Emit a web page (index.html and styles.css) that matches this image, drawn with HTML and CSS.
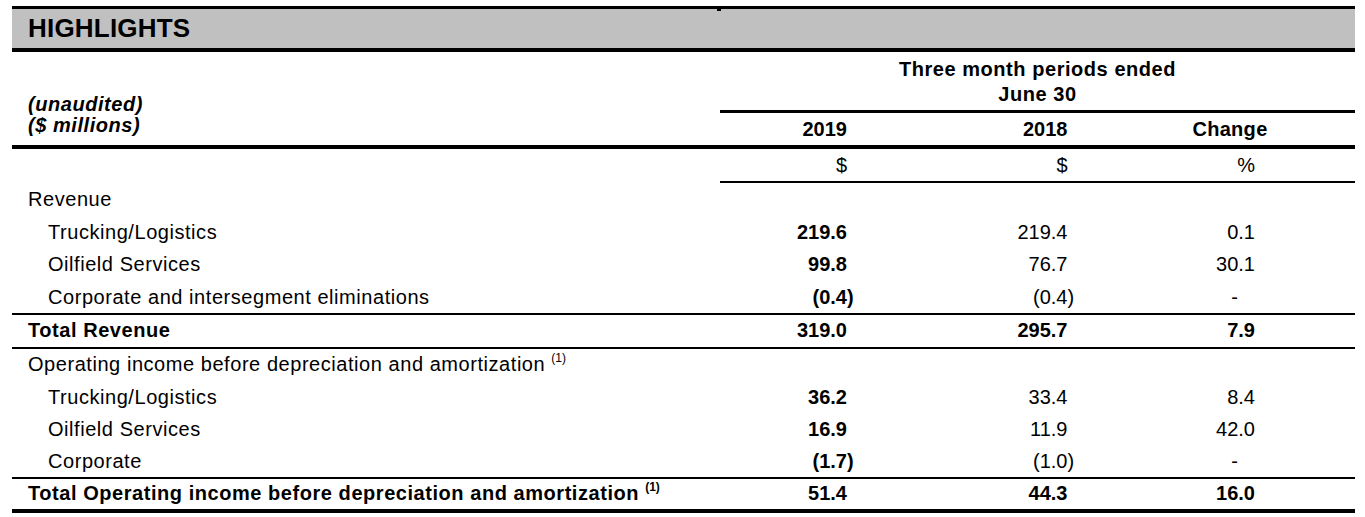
FILE: index.html
```html
<!DOCTYPE html>
<html lang="en">
<head>
<meta charset="utf-8">
<title>Highlights</title>
<link rel="stylesheet" href="styles.css">
</head>
<body>
<div class="page">
  <div class="band">HIGHLIGHTS</div>

  <div class="head">
    <div class="units"><span>(unaudited)</span><span>($ millions)</span></div>
    <div class="period">Three month periods ended<br>June 30</div>
    <div class="yr c2">2019</div>
    <div class="yr c3">2018</div>
    <div class="yr c4 chg">Change</div>
  </div>

  <div class="row">
    <div class="lbl"></div>
    <div class="sub">
      <div class="c2">$</div>
      <div class="c3">$</div>
      <div class="c4">%</div>
    </div>
  </div>

  <div class="sec rev">
    <div class="row"><div class="lbl t">Revenue</div><div class="c2"></div><div class="c3"></div><div class="c4"></div></div>
    <div class="row"><div class="lbl t in">Trucking/Logistics</div><div class="c2 b">219.6</div><div class="c3">219.4</div><div class="c4">0.1</div></div>
    <div class="row"><div class="lbl t in">Oilfield Services</div><div class="c2 b">99.8</div><div class="c3">76.7</div><div class="c4">30.1</div></div>
    <div class="row"><div class="lbl t in">Corporate and intersegment eliminations</div><div class="c2 b"><span class="neg">(0.4)</span></div><div class="c3"><span class="neg">(0.4)</span></div><div class="c4 dash">-</div></div>
  </div>

  <div class="sec tot">
    <div class="row"><div class="lbl t b">Total Revenue</div><div class="c2 b">319.0</div><div class="c3 b">295.7</div><div class="c4 b">7.9</div></div>
  </div>

  <div class="sec op">
    <div class="row"><div class="lbl t">Operating income before depreciation and amortization <sup>(1)</sup></div><div class="c2"></div><div class="c3"></div><div class="c4"></div></div>
    <div class="row"><div class="lbl t in">Trucking/Logistics</div><div class="c2 b">36.2</div><div class="c3">33.4</div><div class="c4">8.4</div></div>
    <div class="row"><div class="lbl t in">Oilfield Services</div><div class="c2 b">16.9</div><div class="c3">11.9</div><div class="c4">42.0</div></div>
    <div class="row"><div class="lbl t in">Corporate</div><div class="c2 b"><span class="neg">(1.7)</span></div><div class="c3"><span class="neg">(1.0)</span></div><div class="c4 dash">-</div></div>
  </div>

  <div class="sec totop">
    <div class="row"><div class="lbl t b">Total Operating income before depreciation and amortization <sup>(1)</sup></div><div class="c2 b">51.4</div><div class="c3 b">44.3</div><div class="c4 b">16.0</div></div>
  </div>
</div>
</body>
</html>
```

FILE: styles.css
```css
html, body {
  margin: 0;
  padding: 0;
  background: #fff;
}

body {
  font-family: "Liberation Sans", Arial, sans-serif;
  font-size: 20px;
  color: #000;
}

.page {
  width: 1343px;
  margin-left: 12px;
  padding-top: 6px;
}

.band {
  position: relative;
  border-top: 3px solid #000;
  border-bottom: 4px solid #000;
  background: #c0c0c0;
  height: 39px;
  line-height: 39px;
  padding-left: 16px;
  font-size: 26px;
  font-weight: bold;
  letter-spacing: 0.2px;
}

.band::after {
  content: "";
  position: absolute;
  left: 705px;
  top: 0;
  width: 4px;
  height: 2px;
  background: #000;
}

.head,
.row {
  display: grid;
  grid-template-columns: 708px 180px 220px 235px;
}

.head {
  grid-template-rows: auto 32px;
  border-bottom: 4px solid #000;
}

.units {
  grid-column: 1;
  grid-row: 1 / span 2;
  display: flex;
  flex-direction: column;
  justify-content: flex-end;
  padding: 0 0 10px 16px;
  line-height: 20.5px;
  font-weight: bold;
  font-style: italic;
  letter-spacing: 0.55px;
}

.period {
  grid-column: 2 / 5;
  grid-row: 1;
  padding: 5px 0 4px;
  line-height: 24.5px;
  text-align: center;
  font-weight: bold;
  letter-spacing: 0.55px;
  border-bottom: 3px solid #000;
}

.yr {
  grid-row: 2;
  line-height: 32px;
  font-weight: bold;
}

.chg {
  text-align: center;
  padding-right: 15px;
  letter-spacing: 0.3px;
}

.head .c2 { grid-column: 2; }
.head .c3 { grid-column: 3; }
.head .c4 { grid-column: 4; }

.sub {
  grid-column: 2 / 5;
  display: grid;
  grid-template-columns: 180px 220px 235px;
  border-bottom: 2px solid #000;
  line-height: 32px;
}

.c2, .c3, .c4 {
  text-align: right;
  white-space: nowrap;
}

.c2 { padding-right: 53px; }
.c3 { padding-right: 52.5px; }
.c4 { padding-right: 100px; }
.head .c4.chg { text-align: center; padding-right: 15px; }

.c4.dash { padding-right: 117px; }

.neg { margin-right: -0.333em; }

.lbl {
  padding-left: 16px;
  white-space: nowrap;
}

.t { letter-spacing: 0.55px; }

.in { padding-left: 36px; }

.b { font-weight: bold; }

.lbl sup {
  font-size: 12px;
  line-height: 0;
  vertical-align: 9px;
  letter-spacing: 0;
  font-weight: normal;
}

.lbl.b sup { font-weight: bold; }

.sec { border-bottom: 2px solid #000; }

.rev .row { line-height: 32.5px; }
.tot .row { line-height: 31px; padding-bottom: 1px; }
.op .row { line-height: 32px; }
.op .row:first-child { line-height: 31px; padding-bottom: 1px; }
.totop .row { line-height: 29px; padding-bottom: 1px; }
.totop { border-bottom-width: 4px; }
```
